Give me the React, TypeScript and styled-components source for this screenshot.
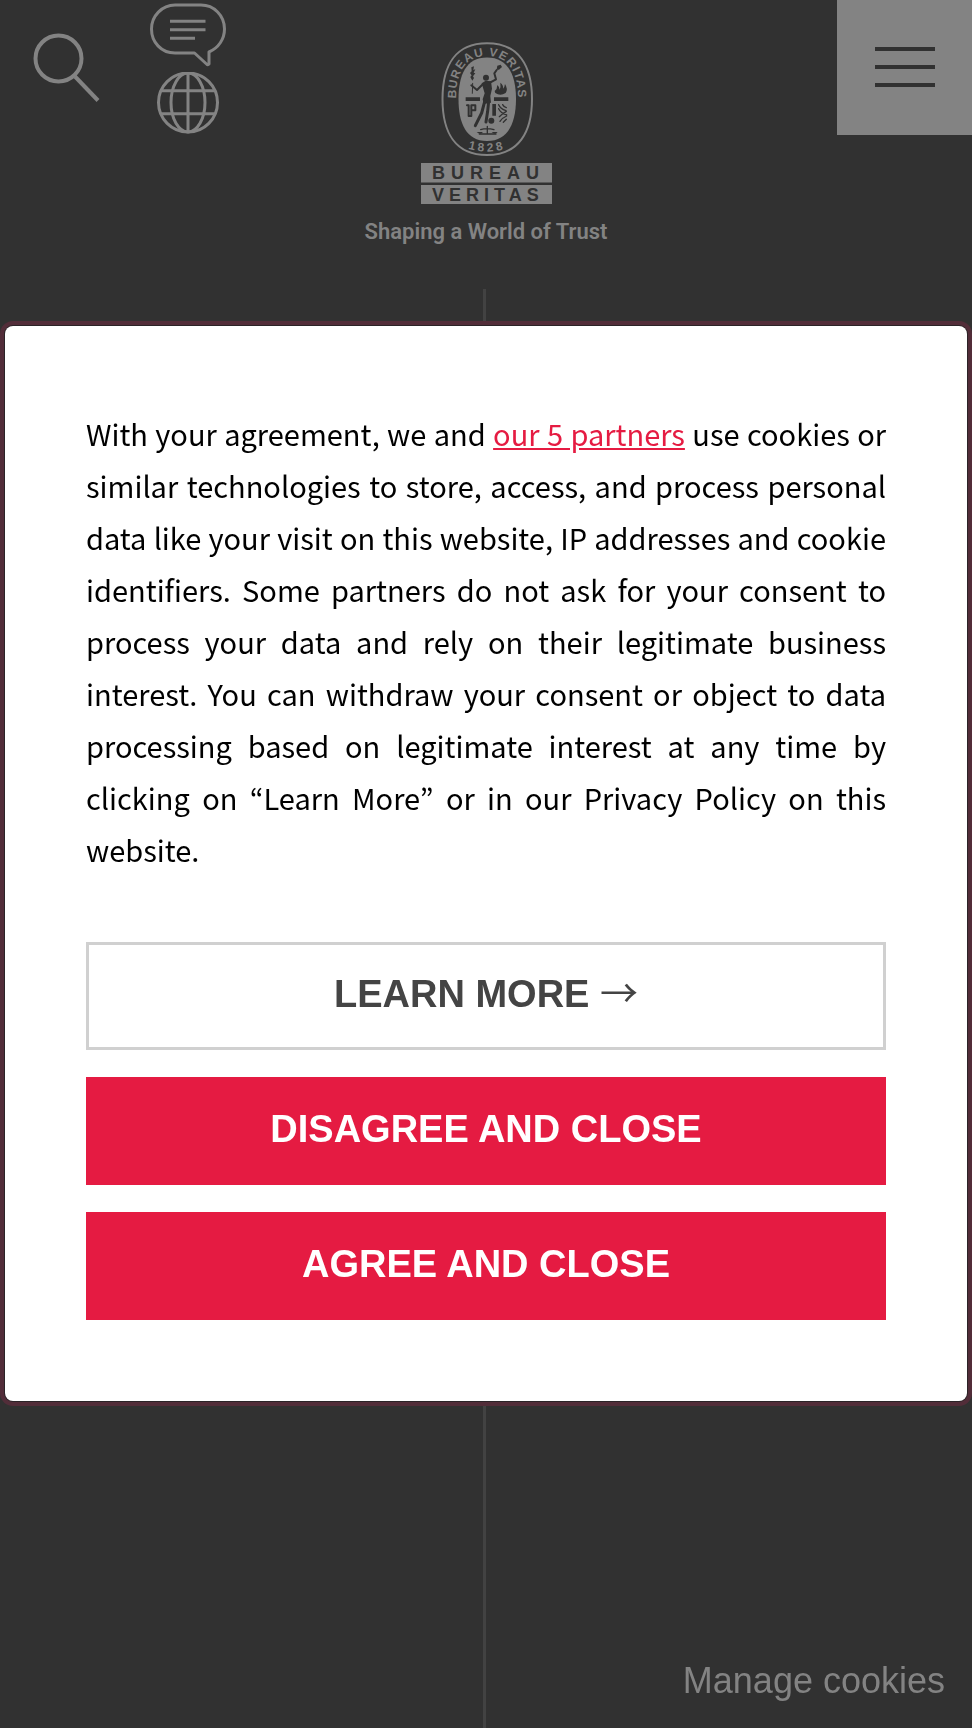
import React from "react";
import styled, { createGlobalStyle } from "styled-components";

const color = {
  page: "#313131",
  muted: "#838383",
  line: "#424242",
  brand: "#e51b42",
  ring: "#522d39",
};

const GlobalStyle = createGlobalStyle`
  *, *::before, *::after { box-sizing: border-box; }
  body {
    margin: 0;
    background: ${color.page};
    font-family: "Liberation Sans", Arial, sans-serif;
  }
  button { font: inherit; cursor: pointer; }
`;

const Page = styled.div`
  display: flex;
  flex-direction: column;
  min-height: 100vh;
  color: ${color.muted};
`;

const Header = styled.header`
  display: grid;
  grid-template-columns: 1fr auto 1fr;
  align-items: start;
  min-height: 289px;
`;

const Tools = styled.nav`
  display: flex;
  gap: 47px;
  padding-left: 33px;
`;

const SearchButton = styled.button`
  display: flex;
  align-self: flex-start;
  margin-top: 33px;
  padding: 0;
  border: 0;
  background: none;
  color: inherit;
`;

const ToolStack = styled.div`
  display: flex;
  flex-direction: column;
  align-items: center;
  gap: 4px;
  padding-top: 3px;
`;

const IconLink = styled.a`
  display: flex;
  color: inherit;
`;

const Brand = styled.a`
  display: flex;
  flex-direction: column;
  align-items: center;
  gap: 12px;
  padding-top: 42px;
  color: inherit;
  text-decoration: none;
`;

const Tagline = styled.span`
  font: 600 22px/32px Roboto, sans-serif;
  white-space: nowrap;
`;

const MenuButton = styled.button`
  display: flex;
  flex-direction: column;
  align-items: center;
  justify-content: center;
  gap: 14px;
  justify-self: end;
  width: 135px;
  height: 135px;
  padding: 0 0 2px;
  border: 0;
  background: ${color.muted};
`;

const MenuLine = styled.span`
  width: 60px;
  height: 4px;
  background: ${color.page};
`;

const Main = styled.main`
  display: flex;
  flex: 1;
  justify-content: center;
  padding-right: 3px;
`;

const Divider = styled.div`
  width: 3px;
  background: ${color.line};
`;

const ManageCookies = styled.button`
  position: fixed;
  right: 27px;
  bottom: 26px;
  padding: 0;
  border: 0;
  background: none;
  color: inherit;
  font-size: 36px;
  line-height: 42px;
`;

const Overlay = styled.div`
  position: fixed;
  inset: 0;
  display: flex;
  align-items: center;
  justify-content: center;
  padding: 5px 5px 6px;
`;

const Dialog = styled.section`
  width: 100%;
  padding: 81px;
  border-radius: 8px;
  background: #fff;
  box-shadow: 0 0 0 1px #2b2327, 0 0 0 5px ${color.ring};
`;

const Notice = styled.p`
  margin: 0 0 67px;
  color: #000;
  font: 400 29px/52px "Noto Sans CJK KR", sans-serif;
  text-align: justify;
`;

const PartnersLink = styled.a`
  color: ${color.brand};
  text-decoration: underline;
`;

const Actions = styled.div`
  display: flex;
  flex-direction: column;
  gap: 27px;
`;

const ActionButton = styled.button<{ $outlined?: boolean }>`
  height: 108px;
  padding: 0 24px 4px;
  border: ${(p) => (p.$outlined ? "3px solid #d0d0d0" : "0")};
  background: ${(p) => (p.$outlined ? "#fff" : color.brand)};
  color: ${(p) => (p.$outlined ? "#444" : "#fff")};
  font-size: 38px;
  line-height: 44px;
  font-weight: 700;
  text-transform: uppercase;
`;

const Arrow = styled.span`
  font-family: "Noto Sans CJK KR", sans-serif;
  font-weight: 400;
  line-height: 1;
`;

const SearchIcon = () => (
  <svg width="70" height="72" viewBox="0 0 70 72" fill="none" stroke="currentColor" aria-hidden="true">
    <circle cx="25.500" cy="25.500" r="23" strokeWidth="4" />
    <path d="M42 43.500l23 24" strokeWidth="4" />
  </svg>
);

const ChatIcon = () => (
  <svg width="76" height="65" viewBox="0 0 76 65" fill="none" stroke="currentColor" strokeWidth="3" aria-hidden="true">
    <path d="M25 2h26c13 0 23.500 10.500 23.500 24 0 10-6 19-15.500 23v12q-1 1.500-2.500 0L44.500 50H25C11 50 1.500 39 1.500 26S12 2 25 2z" strokeLinejoin="round" />
    <path d="M20 18.200h35.500M20 26.800h35.500M20 35.300h25" />
  </svg>
);

const GlobeIcon = () => (
  <svg width="62" height="62" viewBox="0 0 62 62" fill="none" stroke="currentColor" strokeWidth="3" aria-hidden="true">
    <circle cx="31" cy="30.500" r="29.500" />
    <ellipse cx="31" cy="30.500" rx="17" ry="29.500" />
    <path d="M31 1v59M4 18.700h54M4 41.700h54" />
  </svg>
);

const Logo = () => (
  <svg width="131" height="162" viewBox="0 0 131 162" role="img" aria-label="Bureau Veritas 1828">
    <defs>
      <path id="arch" d="M35 66V57C35 28 46 14 66 14S97 28 97 57V66" />
      <path id="base" d="M42 105Q66 114 90 105" />
    </defs>
    <path
      d="M66 1.200C98 1.200 111 24 111 57S98 113 66 113 21.500 90 21.500 57 34 1.200 66 1.200z"
      fill="none"
      stroke={color.muted}
      strokeWidth="2"
    />
    <path
      d="M66 15.500C87 15.500 95 33 95 57S87 99 66 99 37.500 81 37.500 57 45 15.500 66 15.500z"
      fill={color.muted}
    />
    <g fill={color.muted} fontFamily="Liberation Sans, sans-serif" fontWeight="700" textAnchor="middle">
      <text fontSize="12" letterSpacing="1">
        <textPath href="#arch" startOffset="50%">BUREAU VERITAS</textPath>
      </text>
      <text fontSize="12" letterSpacing="3">
        <textPath href="#base" startOffset="50%">1828</textPath>
      </text>
    </g>
    <g transform="translate(-71 -12) scale(.3333)" fill={color.page} stroke={color.page} strokeLinecap="round" strokeLinejoin="round">
      <circle cx="408" cy="143" r="9" stroke="none" />
      <path d="M395 160l12-8 16 2 3 22-5 22 2 20-22 4-3-14 6-18z" stroke="none" />
      <path d="M420 158l18-10-5-18 7-10M399 162l-18 18-17-14" fill="none" strokeWidth="6" />
      <path d="M440 119l2-12 10-3 4 7-9 8z" stroke="none" />
      <path d="M367 190l1-30" fill="none" strokeWidth="3" />
      <path d="M364 112l8-3-2 11 6-2-5 10 5 2-7 9 3 5-5 8-6-11 4-5-5-7 5-5z" stroke="none" />
      <path d="M404 215l-9 34-19 38M416 214l-3 30-5 32" fill="none" strokeWidth="9" />
      <path d="M347 202h43v11h-43zM432 202h43v11h-43zM427 222h11v35h-11z" stroke="none" />
      <path d="M434 183q8-6 8-18 7 6 7 14 4-9 2-21 10 7 8 18 5-4 6-14 10 15 2 27-16 10-31 0z" stroke="none" />
      <path d="M351 226h5v32h8v-32h12v15h-8" fill="none" strokeWidth="6" />
      <path d="M446 224q5 12 22 18M458 224q4 8 11 9M446 236q6 13 24 19M469 244q-13 8-21 16M470 258q-14 6-20 16M469 268l-9 9" fill="none" strokeWidth="4" />
      <circle cx="424" cy="272" r="9" stroke="none" />
      <path d="M392 299q18-6 40 0M412 289v22M388 312h50" fill="none" strokeWidth="4" />
      <path d="M380 306h19q-8 11-19 0zM425 306h18q-8 11-18 0z" stroke="none" />
    </g>
    <path d="M0 121h131v19.500H0zM0 143h131v19H0z" fill={color.muted} />
    <g fill={color.page} fontFamily="Liberation Sans, sans-serif" fontSize="18" fontWeight="700">
      <text x="11" y="137" letterSpacing="6">BUREAU</text>
      <text x="11" y="159" letterSpacing="5">VERITAS</text>
    </g>
  </svg>
);

export default function App() {
  return (
    <>
      <GlobalStyle />
      <Page>
        <Header>
          <Tools aria-label="Tools">
            <SearchButton type="button" aria-label="Search">
              <SearchIcon />
            </SearchButton>
            <ToolStack>
              <IconLink href="#contact" aria-label="Contact us">
                <ChatIcon />
              </IconLink>
              <IconLink href="#sites" aria-label="Our websites">
                <GlobeIcon />
              </IconLink>
            </ToolStack>
          </Tools>
          <Brand href="#home">
            <Logo />
            <Tagline>Shaping a World of Trust</Tagline>
          </Brand>
          <MenuButton type="button" aria-label="Menu">
            <MenuLine />
            <MenuLine />
            <MenuLine />
          </MenuButton>
        </Header>
        <Main>
          <Divider />
        </Main>
        <ManageCookies type="button">Manage cookies</ManageCookies>
      </Page>
      <Overlay>
        <Dialog role="dialog" aria-modal="true" aria-describedby="notice">
          <Notice id="notice">
            With your agreement, we and <PartnersLink href="#partners">our 5 partners</PartnersLink> use
            cookies or similar technologies to store, access, and process personal data like your visit on
            this website, IP addresses and cookie identifiers. Some partners do not ask for your consent to
            process your data and rely on their legitimate business interest. You can withdraw your consent
            or object to data processing based on legitimate interest at any time by clicking on “Learn
            More” or in our Privacy Policy on this website.
          </Notice>
          <Actions>
            <ActionButton type="button" $outlined>
              Learn More <Arrow>→</Arrow>
            </ActionButton>
            <ActionButton type="button">Disagree and close</ActionButton>
            <ActionButton type="button">Agree and close</ActionButton>
          </Actions>
        </Dialog>
      </Overlay>
    </>
  );
}
